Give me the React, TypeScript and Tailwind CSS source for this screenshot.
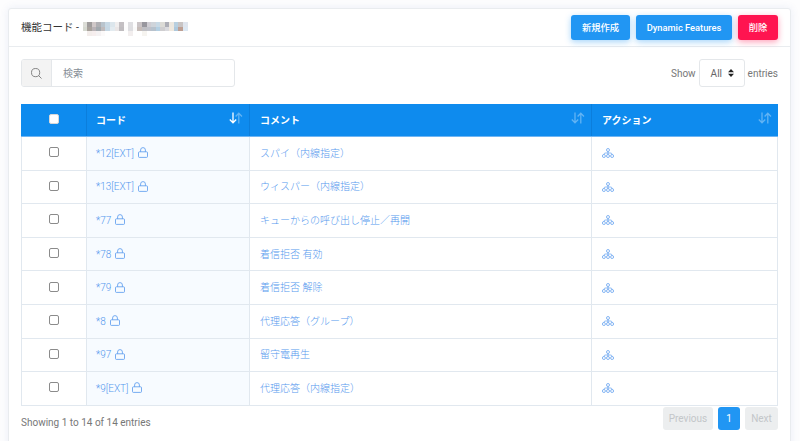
import React from 'react';

const rows = [
  { code: '*12[EXT]', comment: 'スパイ（内線指定）' },
  { code: '*13[EXT]', comment: 'ウィスパー（内線指定）' },
  { code: '*77', comment: 'キューからの呼び出し停止／再開' },
  { code: '*78', comment: '着信拒否 有効' },
  { code: '*79', comment: '着信拒否 解除' },
  { code: '*8', comment: '代理応答（グループ）' },
  { code: '*97', comment: '留守電再生' },
  { code: '*9[EXT]', comment: '代理応答（内線指定）' },
];

// tenant name is masked with a coarse mosaic
const mosaic = [
  ['#dcddd7', '#a09d9d', '#d0c8c8', '#b0b0b4', '#b9c4cd', '#c8d9e5', '#dce6ec', '#f0eeee', '#c4c0c3', '#fdfdfd', '#dfdfe2', '#fdfdfd', '#cac4c6', '#98979e', '#cfcdd3', '#cfd4da', '#c8d9e5', '#dcdbd6', '#adaeb6', '#ece7df', '#b8cfdf', '#c8c4c4', '#dfe5ee'],
  ['#d6d9d1', '#a8a29c', '#b9b3b7', '#a2a9ae', '#c0bbbc', '#c6d8e5', '#e3ebf0', '#eae6e6', '#c0bdc0', '#fcfcfc', '#dedee1', '#fafafa', '#c6bcb8', '#bfbfc4', '#bfc1c9', '#b7c2cd', '#b4cfe2', '#cfced0', '#dadade', '#efe8de', '#adc8dc', '#bd9f93', '#dce8f3'],
  ['#ffffff', '#f3edeb', '#f6eeee', '#f5f2f3', '#fcfafa', '#ffffff', '#ffffff', '#ffffff', '#ffffff', '#ffffff', '#f2eeee', '#ffffff', '#ffffff', '#f6f4f0', '#ffffff', '#ffffff', '#ffffff', '#ffffff', '#ffffff', '#ffffff', '#ffffff', '#ffffff', '#ffffff'],
];

const LockIcon = () => (
  <svg className="mb-px h-[11px] w-[10px]" viewBox="0 0 10 11" fill="none" stroke="currentColor" strokeWidth="0.8">
    <rect x="0.5" y="4.8" width="9" height="5.6" rx="0.9" />
    <path d="M2.6 4.8V3a2.4 2.4 0 0 1 4.8 0v1.8" />
  </svg>
);

const SitemapIcon = () => (
  <svg className="h-[10px] w-3" viewBox="0 0 12 10" fill="none" stroke="currentColor" strokeWidth="0.7">
    <circle cx="6" cy="2" r="1.5" />
    <circle cx="1.9" cy="8" r="1.5" />
    <circle cx="6" cy="8" r="1.5" />
    <circle cx="10.1" cy="8" r="1.5" />
    <path d="M6 3.5v3M1.9 6.5C1.9 5.3 3 5 4.4 5h3.2c1.4 0 2.5.3 2.5 1.5" />
  </svg>
);

const SortIcon = ({ active = false }: { active?: boolean }) => (
  <svg className="h-3 w-[14px]" viewBox="0 0 14 12" fill="none" stroke="#fff" strokeWidth="1.3">
    <path d="M4 0.5v10M0.8 7.5L4 10.8l3.2-3.3" opacity={active ? 1 : 0.35} />
    <path d="M9.8 11.5v-10M6.6 4.5L9.8 1.2L13 4.5" opacity="0.35" />
  </svg>
);

const Checkbox = ({ head = false }: { head?: boolean }) => (
  <span className={`block h-[10px] w-[10px] rounded-[2px] border bg-white ${head ? 'border-[#d8d8d8]' : 'border-[#8b8b8b]'}`} />
);

const columns = 'grid grid-cols-[66px_163px_342px_186px]';

export default function App() {
  return (
    <div className="h-[441px] overflow-hidden bg-[#fdfdfe] pt-2 pr-[9px] pl-2 font-['Roboto','Noto_Sans_CJK_JP',sans-serif] text-[10px] text-[#777]">
      <div className="h-[460px] rounded-[3px] border border-[#e9ecef] bg-white shadow-[0_0_9px_rgba(69,101,173,0.1)]">
        <header className="flex h-[38px] items-center justify-between border-b border-[#e9ecef] pr-3 pl-3">
          <h1 className="flex items-center text-[10.5px] text-[#333]">
            <span className="whitespace-pre">機能コード - </span>
            <span className="mt-[3px] ml-px grid grid-cols-[repeat(23,4.57px)]">
              {mosaic.flat().map((color, i) => (
                <i key={i} className="h-[4.6px]" style={{ backgroundColor: color }} />
              ))}
            </span>
          </h1>
          <div className="flex gap-1.5 text-[9.3px] font-medium text-white">
            <button className="h-[25px] w-[59px] rounded-[3px] bg-[#2196f3] shadow-[0_2px_6px_#2196f366]">新規作成</button>
            <button className="h-[25px] w-[96px] rounded-[3px] bg-[#2196f3] shadow-[0_2px_6px_#2196f366]">Dynamic Features</button>
            <button className="h-[25px] w-[40px] rounded-[3px] bg-[#ff1450] shadow-[0_2px_6px_#ff145066]">削除</button>
          </div>
        </header>

        <div className="px-3 pt-3">
          <div className="flex h-7 items-center justify-between">
            <div className="flex h-7 w-[214px] overflow-hidden rounded-[3px] border border-[#e4e7ea]">
              <div className="flex w-[30px] items-center justify-center border-r border-[#e4e7ea] bg-[#f3f3f3]">
                <svg className="h-[11px] w-[11px]" viewBox="0 0 11 11" fill="none" stroke="#777" strokeWidth="0.9">
                  <circle cx="4.6" cy="4.6" r="4.1" />
                  <path d="M7.5 7.5l3 3" />
                </svg>
              </div>
              <span className="flex items-center pl-[11px] text-[10px] text-[#868e96]">検索</span>
            </div>
            <div className="flex items-center gap-[3px]">
              <span>Show</span>
              <span className="flex h-7 w-[46px] items-center gap-1.5 rounded-[3px] border border-[#e4e7ea] pl-[11px] text-[#666]">
                All
                <svg className="h-2 w-[6px]" viewBox="0 0 6 8" fill="#222">
                  <path d="M3 0l3 3.2H0zM3 8l3-3.2H0z" />
                </svg>
              </span>
              <span>entries</span>
            </div>
          </div>

          <div className="mt-[17px] w-[757px] border-x border-[#e1e8ef]">
            <div className={`${columns} -mx-px h-[33px] border-b border-[#6fb5f3] bg-[#0e8bee] text-[10px] font-bold text-white`}>
              <div className="flex items-center justify-center border-r border-[#0b7edc] pb-0.5"><Checkbox head /></div>
              <div className="flex items-center justify-between border-r border-[#0b7edc] pr-1.5 pl-[9px]">
                <span>コード</span><span className="pb-1"><SortIcon active /></span>
              </div>
              <div className="flex items-center justify-between border-r border-[#0b7edc] pr-1.5 pl-[10px]">
                <span>コメント</span><span className="pb-1"><SortIcon /></span>
              </div>
              <div className="flex items-center justify-between pr-1.5 pl-[10px]">
                <span>アクション</span><span className="pb-1"><SortIcon /></span>
              </div>
            </div>
            {rows.map((row) => (
              <div key={row.code} className={`${columns} h-[33.6px] -mx-px border-b border-[#e1e8ef] font-light text-[#5598ee]`}>
                <div className="flex items-center justify-center border-r border-[#e1e8ef] pb-0.5"><Checkbox /></div>
                <div className="flex items-center gap-1 border-r border-[#e1e8ef] bg-[#f7fbff] pl-[9px]">
                  <span>{row.code}</span><LockIcon />
                </div>
                <div className="flex items-center border-r border-[#e1e8ef] pl-[10px]">{row.comment}</div>
                <div className="flex items-center pl-[10px]"><SitemapIcon /></div>
              </div>
            ))}
          </div>

          <div className="flex items-start justify-between">
            <span className="pt-[9px]">Showing 1 to 14 of 14 entries</span>
            <div className="flex gap-[5px] pt-px text-[#c3c6c9]">
              <span className="flex h-[23px] w-[50px] items-center justify-center rounded-[3px] bg-[#eceeef]">Previous</span>
              <span className="flex h-[23px] w-[22px] items-center justify-center rounded-[3px] bg-[#2196f3] text-white">1</span>
              <span className="flex h-[23px] w-[33px] items-center justify-center rounded-[3px] bg-[#eceeef]">Next</span>
            </div>
          </div>
        </div>
      </div>
    </div>
  );
}
